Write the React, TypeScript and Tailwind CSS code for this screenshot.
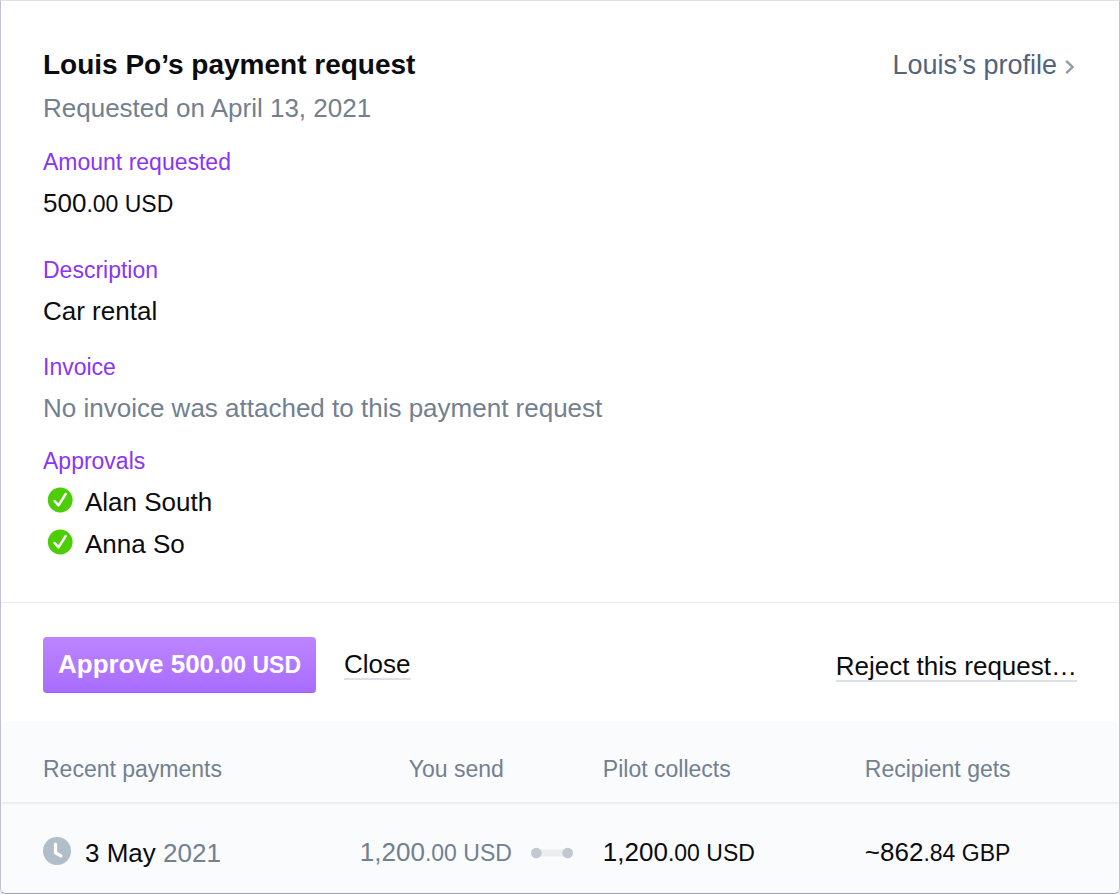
import clsx from 'clsx'
import React, { FC, ReactNode } from 'react'

type Payment = {
  id: string
  day: string
  year: string
  sent: [string, string]
  collected: [string, string]
  received: [string, string]
}

const approvers = ['Alan South', 'Anna So']

const payments: Payment[] = [
  {
    id: '1',
    day: '3 May',
    year: '2021',
    sent: ['1,200', '.00 USD'],
    collected: ['1,200', '.00 USD'],
    received: ['~862', '.84 GBP']
  }
]

const CheckIcon: FC = () => (
  <svg viewBox="0 0 26 26" className="w-[26px] h-[26px] shrink-0" aria-hidden="true">
    <circle cx="13.2" cy="13" r="12.4" fill="#4ccd05" />
    <path
      d="M7.6 14l3.9 4.4 7.2-11.4"
      fill="none"
      stroke="#fff"
      strokeWidth="2.5"
      strokeLinecap="round"
      strokeLinejoin="round"
    />
  </svg>
)

const ClockIcon: FC = () => (
  <svg viewBox="0 0 28 28" className="w-7 h-7 shrink-0" aria-hidden="true">
    <circle cx="14" cy="14" r="14" fill="#b1bec9" />
    <path
      d="M12.5 7.2v8.6l5.4 3.1"
      fill="none"
      stroke="#fff"
      strokeWidth="3.3"
      strokeLinecap="round"
      strokeLinejoin="round"
    />
  </svg>
)

const ConnectorIcon: FC = () => (
  <svg viewBox="0 0 42 12" className="w-[42px] h-3" aria-hidden="true">
    <rect x="5" y="2.5" width="32" height="7" fill="#ebedf0" />
    <circle cx="5.3" cy="6" r="5.3" fill="#c2c8d2" />
    <circle cx="36.7" cy="6" r="5.3" fill="#c2c8d2" />
  </svg>
)

const ChevronIcon: FC = () => (
  <svg viewBox="0 0 10 16" className="mt-1 w-[10px] h-4" aria-hidden="true">
    <path d="M1.2 1.8l6.4 6.2-6.4 6.2" fill="none" stroke="#8d9bab" strokeWidth="2.4" />
  </svg>
)

type AmountProps = {
  value: [string, string]
}

// Whole units are set larger than the cents and the currency
const Amount: FC<AmountProps> = ({ value: [whole, rest] }) => (
  <>
    {whole}
    <span className="text-[23px]">{rest}</span>
  </>
)

type FieldProps = {
  label: string
  className?: string
  children: ReactNode
}

const Field: FC<FieldProps> = ({ label, className, children }) => (
  <div className={className}>
    <dt className="text-[23px] leading-10 text-[#8a35f5]">{label}</dt>
    {children}
  </div>
)

const App: FC = () => {
  const linkStyle = 'border-b-2 border-[#dce1e8] text-[26px] leading-7 text-[#0b0c0e]'

  return (
    <div className="bg-[#e9e8f1] font-['Liberation_Sans',Arial,sans-serif]">
      <main className="overflow-hidden rounded-b-md border border-t-[#e0e0ea] border-x-[#c3bfd8] border-b-[#a39fb5] bg-white text-[26px] leading-[42px] text-[#0b0c0e]">
        {/* Request details */}
        <section className="px-[42px] pt-[42px] pb-[37px]">
          <header className="flex items-start justify-between">
            <div>
              <h1 className="text-[28px] leading-[44px] font-bold">Louis Po’s payment request</h1>
              <p className="text-[#728090]">Requested on April 13, 2021</p>
            </div>
            <a
              href="#profile"
              className="flex items-center gap-2 pr-[2px] text-[27px] leading-[44px] text-[#52637a]"
            >
              Louis’s profile
              <ChevronIcon />
            </a>
          </header>
          <dl className="mt-[13px]">
            <Field label="Amount requested">
              <dd>
                <Amount value={['500', '.00 USD']} />
              </dd>
            </Field>
            <Field label="Description" className="mt-[25px]">
              <dd>Car rental</dd>
            </Field>
            <Field label="Invoice" className="mt-[15px]">
              <dd className="text-[#728090]">No invoice was attached to this payment request</dd>
            </Field>
            <Field label="Approvals" className="mt-3">
              {approvers.map((name) => (
                <dd key={name} className="flex items-center gap-3 pl-1">
                  <span className="pb-1">
                    <CheckIcon />
                  </span>
                  {name}
                </dd>
              ))}
            </Field>
          </dl>
        </section>

        {/* Actions */}
        <section className="flex items-center justify-between border-t border-[#e9e9ed] px-[42px] pt-[34px] pb-7">
          <div className="flex items-center gap-7">
            <button
              type="button"
              className="h-14 rounded border-b border-[#9a5ef8] bg-linear-to-b from-[#bd84ff] to-[#a86dff] px-[15px] font-bold text-white"
            >
              <Amount value={['Approve 500', '.00 USD']} />
            </button>
            <button type="button" className={linkStyle}>
              Close
            </button>
          </div>
          <button type="button" className={clsx(linkStyle, 'mt-1')}>
            Reject this request…
          </button>
        </section>

        {/* Recent payments */}
        <section className="rounded-t-lg bg-[#fafbfd]">
          <table className="w-full table-fixed text-left">
            <thead>
              <tr className="h-[82px] border-b-2 border-[#eceef1] text-[23px] text-[#728090]">
                <th className="w-[27%] pt-[14px] pl-[42px] font-normal">Recent payments</th>
                <th className="w-[209px] pt-[14px] pr-2 text-right font-normal">You send</th>
                <td className="w-[91px]" />
                <th className="w-[262px] pt-[14px] font-normal">Pilot collects</th>
                <th className="pt-[14px] font-normal">Recipient gets</th>
              </tr>
            </thead>
            <tbody>
              {payments.map((payment) => (
                <tr key={payment.id} className="h-[90px]">
                  <td className="pt-2 pl-[42px]">
                    <div className="flex items-center gap-[14px]">
                      <span className="pb-1">
                        <ClockIcon />
                      </span>
                      <span>
                        {payment.day} <span className="text-[#728090]">{payment.year}</span>
                      </span>
                    </div>
                  </td>
                  <td className="pt-2 text-right text-[#728090]">
                    <Amount value={payment.sent} />
                  </td>
                  <td className="pt-2 pl-[19px]">
                    <ConnectorIcon />
                  </td>
                  <td className="pt-2">
                    <Amount value={payment.collected} />
                  </td>
                  <td className="pt-2">
                    <Amount value={payment.received} />
                  </td>
                </tr>
              ))}
            </tbody>
          </table>
        </section>
      </main>
    </div>
  )
}

export default App
